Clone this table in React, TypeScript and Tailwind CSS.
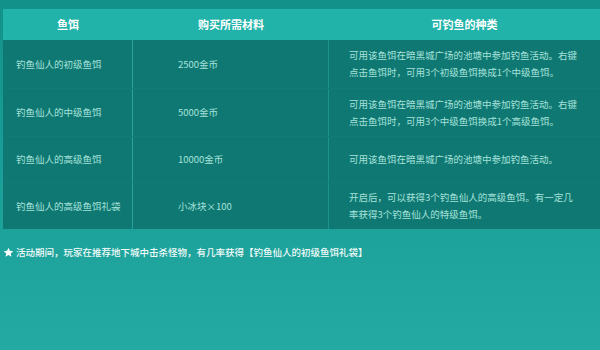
const rows = [
  {
    name: "钓鱼仙人的初级鱼饵",
    cost: "2500金币",
    desc: ["可用该鱼饵在暗黑城广场的池塘中参加钓鱼活动。右键", "点击鱼饵时，可用3个初级鱼饵换成1个中级鱼饵。"],
    h: "h-[49px]",
  },
  {
    name: "钓鱼仙人的中级鱼饵",
    cost: "5000金币",
    desc: ["可用该鱼饵在暗黑城广场的池塘中参加钓鱼活动。右键", "点击鱼饵时，可用3个中级鱼饵换成1个高级鱼饵。"],
    h: "h-[48px]",
  },
  {
    name: "钓鱼仙人的高级鱼饵",
    cost: "10000金币",
    desc: ["可用该鱼饵在暗黑城广场的池塘中参加钓鱼活动。"],
    h: "h-[46px]",
  },
  {
    name: "钓鱼仙人的高级鱼饵礼袋",
    cost: "小冰块×100",
    desc: ["开启后，可以获得3个钓鱼仙人的高级鱼饵。有一定几", "率获得3个钓鱼仙人的特级鱼饵。"],
    h: "h-[46px]",
  },
];

const App = () => {
  return (
    <div
      className="w-[600px] h-[350px] overflow-hidden bg-gradient-to-b from-[#12918a] via-[#1a9f98] to-[#24aaa2] pt-[9px] pl-[3px]"
      style={{ fontFamily: '"Noto Sans CJK SC", "Noto Sans", sans-serif' }}
    >
      {/* Table */}
      <div className="w-[597px]">
        <div className="flex h-[31px] items-center bg-[#21b3a9] text-[11px] font-bold text-white">
          <div className="w-[130px] text-center">鱼饵</div>
          <div className="w-[196px] text-center">购买所需材料</div>
          <div className="flex-1 text-center">可钓鱼的种类</div>
        </div>
        <div className="bg-[#0f7873] text-[9.5px] text-[#a6e2da]">
          {rows.map((r, i) => (
            <div key={i} className={`flex ${r.h} ${i < rows.length - 1 ? "border-b border-[#117c76]" : ""}`}>
              <div className="flex w-[130px] items-center border-r border-[#26a59d] pl-[13px]">{r.name}</div>
              <div className="flex w-[196px] items-center border-r border-[#1d928b] pl-[45px]">{r.cost}</div>
              <div className="flex flex-1 flex-col justify-center pl-[20px] leading-[17px]">
                {r.desc.map((d, j) => (
                  <div key={j}>{d}</div>
                ))}
              </div>
            </div>
          ))}
        </div>
      </div>

      {/* Note */}
      <div className="mt-[16px] flex items-center gap-[2px] text-[9.5px] font-medium text-[#f2fbfa]">
        <svg className="h-[11px] w-[11px]" viewBox="0 0 24 24" fill="white">
          <path d="M12 1.5l3.1 6.9 7.4.7-5.6 5 1.7 7.4L12 17.6l-6.6 3.9 1.7-7.4-5.6-5 7.4-.7z" />
        </svg>
        <span>活动期间，玩家在推荐地下城中击杀怪物，有几率获得【钓鱼仙人的初级鱼饵礼袋】</span>
      </div>
    </div>
  );
};

export default App;
